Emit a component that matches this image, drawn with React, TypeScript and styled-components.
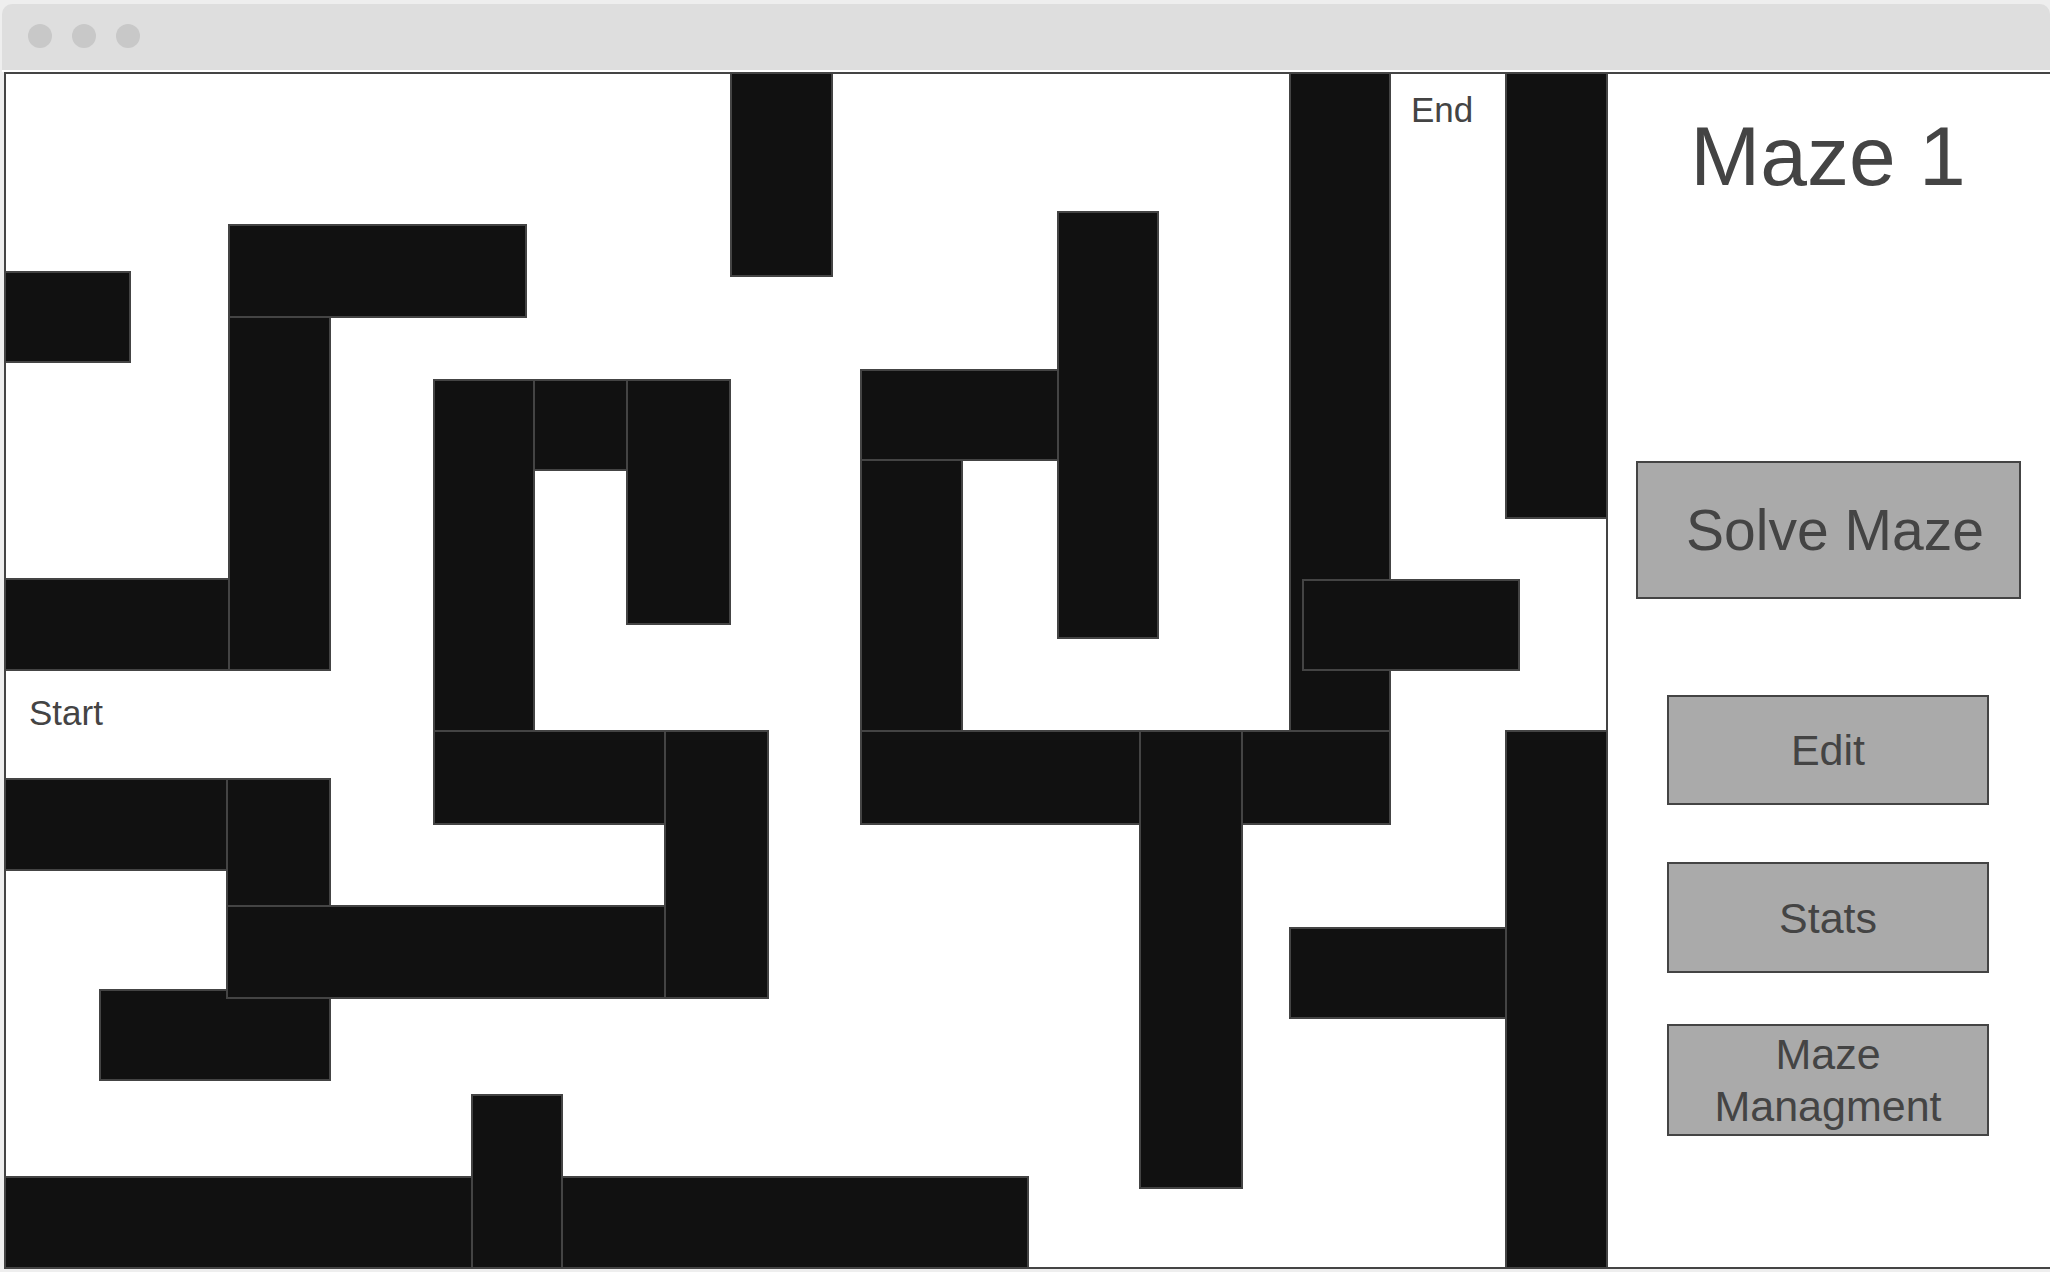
import React from 'react'
import styled, { createGlobalStyle } from 'styled-components'

// wall rectangles in page pixels: [x1, y1, x2, y2], border included
const WALLS: [number, number, number, number][] = [
  [730, 72, 833, 277],
  [228, 224, 527, 318],
  [4, 271, 131, 363],
  [228, 316, 331, 671],
  [4, 578, 230, 671],
  [433, 379, 535, 732],
  [533, 379, 628, 471],
  [626, 379, 731, 625],
  [433, 730, 666, 825],
  [664, 730, 769, 999],
  [4, 778, 228, 871],
  [226, 778, 331, 907],
  [99, 989, 331, 1081],
  [226, 905, 666, 999],
  [471, 1094, 563, 1269],
  [4, 1176, 473, 1269],
  [561, 1176, 1029, 1269],
  [860, 369, 1059, 461],
  [1057, 211, 1159, 639],
  [860, 459, 963, 732],
  [860, 730, 1141, 825],
  [1139, 730, 1243, 1189],
  [1241, 730, 1391, 825],
  [1289, 72, 1391, 732],
  [1302, 579, 1520, 671],
  [1505, 72, 1608, 519],
  [1505, 730, 1608, 1269],
  [1289, 927, 1507, 1019],
]

const ORIGIN_X = 6
const ORIGIN_Y = 74

const App: React.FC = () => {
  return (
    <>
      <GlobalStyle />
      <Window>
        <TitleBar>
          <Dot />
          <Dot />
          <Dot />
        </TitleBar>
        <Frame>
          <MazeBoard>
            {WALLS.map(([x1, y1, x2, y2], i) => (
              <Wall
                key={i}
                style={{
                  left: x1 - ORIGIN_X,
                  top: y1 - ORIGIN_Y,
                  width: x2 - x1,
                  height: y2 - y1,
                }}
              />
            ))}
            <MazeLabel $left={23} $top={621}>Start</MazeLabel>
            <MazeLabel $left={1405} $top={18}>End</MazeLabel>
          </MazeBoard>
          <SidePanel>
            <Title>Maze 1</Title>
            <SolveButton>Solve Maze</SolveButton>
            <ActionButton $mt={96} $h={110}>Edit</ActionButton>
            <ActionButton $mt={57} $h={111}>Stats</ActionButton>
            <ActionButton $mt={51} $h={112}>Maze Managment</ActionButton>
          </SidePanel>
        </Frame>
      </Window>
    </>
  )
}

const GlobalStyle = createGlobalStyle`
  html, body {
    margin: 0;
    padding: 0;
    background: #EEEEEE;
    overflow: hidden;
    font-family: "Liberation Sans", Arial, sans-serif;
  }
  * {
    box-sizing: border-box;
  }
`

const Window = styled.div`
  margin: 4px 0 0 2px;
  width: 2048px;
`

const TitleBar = styled.div`
  display: flex;
  align-items: center;
  gap: 20px;
  height: 68px;
  padding: 0 0 2px 26px;
  background: #DEDEDE;
  border-bottom: 2px solid #FFFFFF;
  border-radius: 10px 10px 0 0;
`

const Dot = styled.span`
  width: 24px;
  height: 24px;
  border-radius: 50%;
  background: #C8C8C8;
`

const Frame = styled.div`
  display: flex;
  margin-left: 2px;
  width: 2060px;
  height: 1197px;
  border: 2px solid #444444;
  border-right: none;
  background: #FFFFFF;
`

const MazeBoard = styled.div`
  position: relative;
  flex: 0 0 1600px;
  height: 100%;
`

const Wall = styled.div`
  position: absolute;
  background: #111111;
  border: 2px solid #444444;
`

const MazeLabel = styled.span<{ $left: number; $top: number }>`
  position: absolute;
  left: ${p => p.$left}px;
  top: ${p => p.$top}px;
  font-size: 35px;
  line-height: 35px;
  color: #444444;
`

const SidePanel = styled.div`
  display: flex;
  flex-direction: column;
  align-items: center;
  width: 442px;
  border-left: 2px solid #444444;
`

const Title = styled.h1`
  margin: 40px 0 0;
  font-size: 84px;
  line-height: 84px;
  font-weight: 400;
  color: #444444;
`

const SolveButton = styled.div`
  display: flex;
  align-items: center;
  justify-content: center;
  margin-top: 263px;
  width: 385px;
  height: 138px;
  padding-left: 14px;
  background: #AAAAAA;
  border: 2px solid #444444;
  font-size: 57px;
  color: #444444;
`

const ActionButton = styled.div<{ $mt: number; $h: number }>`
  display: flex;
  align-items: center;
  justify-content: center;
  margin-top: ${p => p.$mt}px;
  width: 322px;
  height: ${p => p.$h}px;
  padding: 0 20px;
  background: #AAAAAA;
  border: 2px solid #444444;
  font-size: 43px;
  line-height: 52px;
  text-align: center;
  color: #444444;
`

export default App
